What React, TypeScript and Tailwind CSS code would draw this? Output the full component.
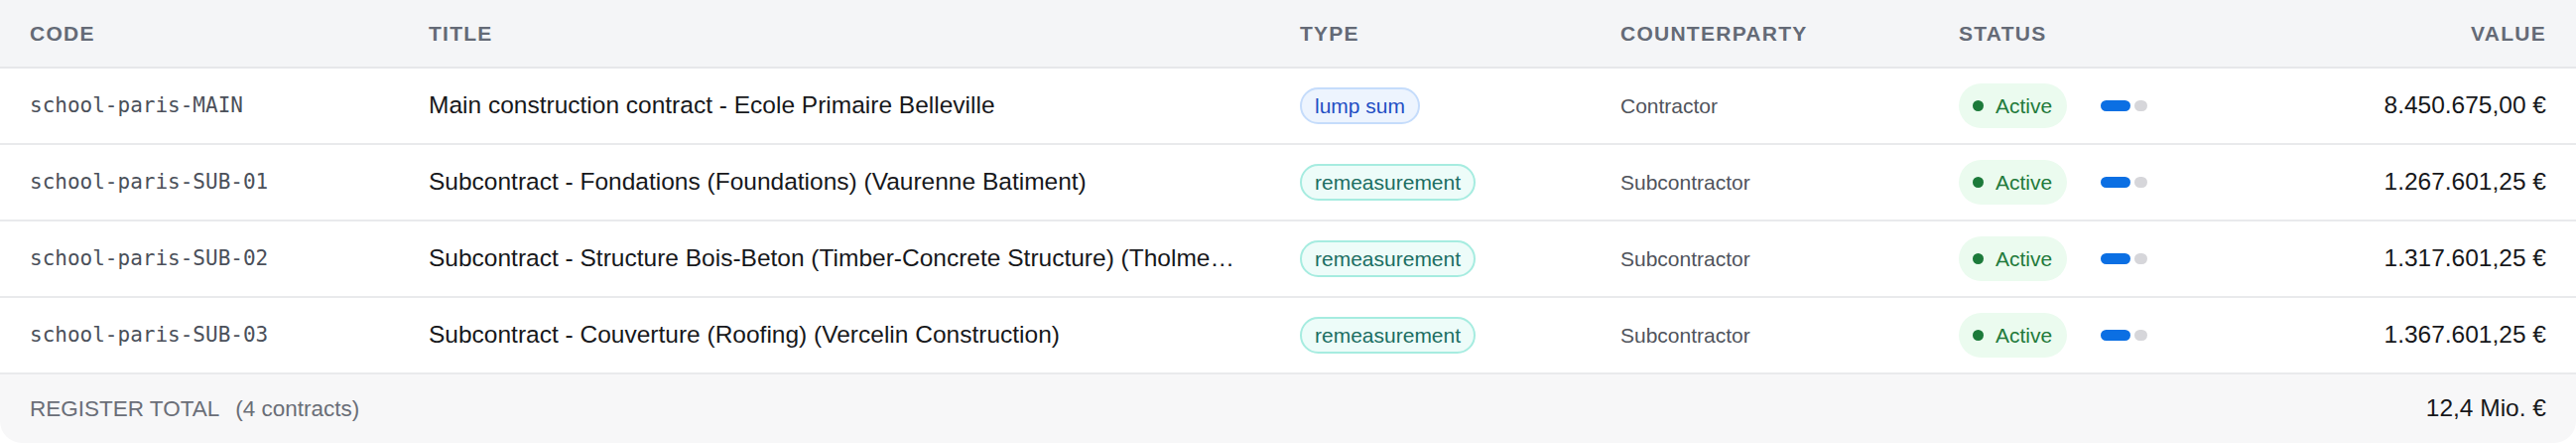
const rows = [
  {
    code: 'school-paris-MAIN',
    title: 'Main construction contract - Ecole Primaire Belleville',
    type: 'lump sum',
    counterparty: 'Contractor',
    value: '8.450.675,00 €',
  },
  {
    code: 'school-paris-SUB-01',
    title: 'Subcontract - Fondations (Foundations) (Vaurenne Batiment)',
    type: 'remeasurement',
    counterparty: 'Subcontractor',
    value: '1.267.601,25 €',
  },
  {
    code: 'school-paris-SUB-02',
    title: 'Subcontract - Structure Bois-Beton (Timber-Concrete Structure) (Tholmet Charpente)',
    type: 'remeasurement',
    counterparty: 'Subcontractor',
    value: '1.317.601,25 €',
  },
  {
    code: 'school-paris-SUB-03',
    title: 'Subcontract - Couverture (Roofing) (Vercelin Construction)',
    type: 'remeasurement',
    counterparty: 'Subcontractor',
    value: '1.367.601,25 €',
  },
]

const grid = 'grid grid-cols-[402px_878px_323px_341px_340px_1fr] items-center'

function TypeBadge({ type }: { type: string }) {
  const isLump = type === 'lump sum'
  return (
    <span
      className={
        isLump
          ? 'inline-flex h-[37px] items-center rounded-full border-2 border-[#c5dcfb] bg-[#edf4fe] px-[13px] text-[21px] text-[#1f4fc4]'
          : 'inline-flex h-[37px] items-center rounded-full border-2 border-[#a6ece0] bg-[#edfcf9] px-[13px] text-[21px] text-[#1b6e62]'
      }
    >
      {type}
    </span>
  )
}

function StatusCell() {
  return (
    <div className="flex items-center gap-[34px]">
      <span className="inline-flex h-[45px] items-center gap-[12px] rounded-full bg-[#ebfbef] pl-[14px] pr-[15px] text-[21px] text-[#1f7a3b]">
        <span className="h-[11px] w-[11px] rounded-full bg-[#1c7a3a]" />
        Active
      </span>
      <div className="flex items-center gap-[4px]">
        <span className="h-[11px] w-[30px] rounded-full bg-[#0b6fe3]" />
        <span className="h-[11px] w-[13px] rounded-full bg-[#d6d6da]" />
      </div>
    </div>
  )
}

export default function App() {
  return (
    <div className="min-h-[446px] w-[2596px] bg-white font-['Liberation_Sans',Arial,sans-serif]">
      <div className="overflow-hidden rounded-b-[22px]">
        <div
          className={`${grid} h-[69px] border-b-2 border-[#e6e7ea] bg-[#f4f5f7] text-[21px] font-bold uppercase tracking-[0.06em] text-[#646a76]`}
        >
          <div className="px-[30px]">Code</div>
          <div className="px-[30px]">Title</div>
          <div className="px-[30px]">Type</div>
          <div className="px-[30px]">Counterparty</div>
          <div className="px-[30px]">Status</div>
          <div className="px-[30px] text-right">Value</div>
        </div>

        {rows.map((row) => (
          <div className={`${grid} h-[77px] border-b-2 border-[#e9eaec]`} key={row.code}>
            <div className="px-[30px] font-['DejaVu_Sans_Mono',monospace] text-[21px] text-[#4b505a]">
              {row.code}
            </div>
            <div className="truncate px-[30px] text-[24.5px] text-[#17181b]">{row.title}</div>
            <div className="px-[30px]">
              <TypeBadge type={row.type} />
            </div>
            <div className="px-[30px] text-[21px] text-[#50545c]">{row.counterparty}</div>
            <div className="px-[30px]">
              <StatusCell />
            </div>
            <div className="px-[30px] text-right text-[24.5px] text-[#17181b]">{row.value}</div>
          </div>
        ))}

        <div className="flex h-[69px] items-center justify-between bg-[#f7f7f8] px-[30px]">
          <div className="flex items-center gap-[16px] text-[22.5px] text-[#6a6e77]">
            <span>REGISTER TOTAL</span>
            <span>(4 contracts)</span>
          </div>
          <div className="text-[24.5px] text-[#17181b]">12,4 Mio. €</div>
        </div>
      </div>
    </div>
  )
}
